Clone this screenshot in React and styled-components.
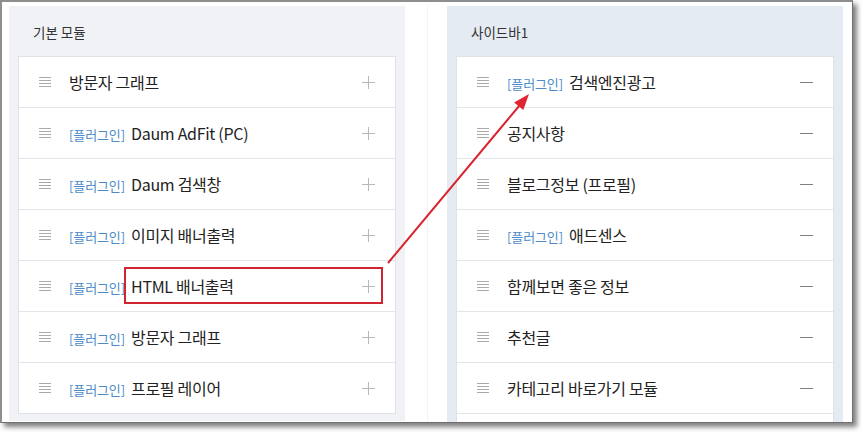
import React from "react";
import styled, { createGlobalStyle } from "styled-components";

const Global = createGlobalStyle`
  html, body { margin: 0; padding: 0; background: #ffffff; }
  body { font-family: "Noto Sans CJK KR", "Noto Sans", sans-serif; }
`;

const Stage = styled.div`
  position: relative;
  width: 862px;
  height: 432px;
  overflow: hidden;
`;

const Frame = styled.div`
  box-sizing: border-box;
  width: 853px;
  height: 423px;
  border-top: 2px solid #8e8e8e;
  border-left: 2px solid #8e8e8e;
  border-right: 1px solid #6f6f6f;
  border-bottom: 1px solid #6f6f6f;
  box-shadow: 4px 4px 5px rgba(0, 0, 0, 0.5);
  background: #ffffff;
  padding: 4px 9px 0 7px;
  display: flex;
  overflow: hidden;
`;

const Panel = styled.section`
  width: 396px;
  flex: none;
  background: ${(p) => (p.$tone === "blue" ? "#e5ebf2" : "#f0f2f5")};
  padding: 0 9px 7px;
  box-sizing: border-box;
  align-self: flex-start;
`;

const PanelTitle = styled.div`
  height: 50px;
  display: flex;
  align-items: center;
  padding-left: 15px;
  padding-top: 2px;
  box-sizing: border-box;
  font-size: 13.5px;
  color: #333;
`;

const List = styled.ul`
  list-style: none;
  margin: 0;
  padding: 0;
  background: #ffffff;
  border: 1px solid #dfe2e6;
`;

const Row = styled.li`
  height: 50px;
  display: flex;
  align-items: center;
  padding: 0 20px;
  border-top: 1px solid #e3e5e9;
  &:first-child { border-top: none; }
`;

const Handle = styled.span`
  width: 12px;
  height: 10px;
  flex: none;
  margin-right: 18px;
  background: repeating-linear-gradient(
    to bottom,
    #aaaaaa 0,
    #aaaaaa 1px,
    transparent 1px,
    transparent 3px
  );
`;

const Label = styled.span`
  flex: 1;
  font-size: 16px;
  color: #222;
  white-space: nowrap;
  letter-spacing: -0.3px;
`;

const Tag = styled.span`
  font-size: 13px;
  color: #4d8bc8;
  margin-right: 6px;
  letter-spacing: -0.1px;
`;

const Gap = styled.div`
  width: 42px;
  flex: none;
  display: flex;
  justify-content: flex-start;
  padding-left: 22px;
  box-sizing: border-box;
`;

const GapLine = styled.div`
  width: 1px;
  height: 100%;
  background: #f2f3f5;
`;

const ActionIcon = ({ kind }) => (
  <svg width="13" height="13" viewBox="0 0 13 13" style={{ flex: "none" }}>
    <line
      x1="0"
      y1="6.5"
      x2="13"
      y2="6.5"
      stroke={kind === "add" ? "#b8b8b8" : "#808080"}
      strokeWidth="1"
    />
    {kind === "add" && (
      <line x1="6.5" y1="0" x2="6.5" y2="13" stroke="#b8b8b8" strokeWidth="1" />
    )}
  </svg>
);

const Overlay = styled.svg`
  position: absolute;
  left: 0;
  top: 0;
  pointer-events: none;
`;

const basic = [
  { name: "방문자 그래프" },
  { tag: true, name: "Daum AdFit (PC)" },
  { tag: true, name: "Daum 검색창" },
  { tag: true, name: "이미지 배너출력" },
  { tag: true, name: "HTML 배너출력" },
  { tag: true, name: "방문자 그래프" },
  { tag: true, name: "프로필 레이어" },
];

const sidebar = [
  { tag: true, name: "검색엔진광고" },
  { name: "공지사항" },
  { name: "블로그정보 (프로필)" },
  { tag: true, name: "애드센스" },
  { name: "함께보면 좋은 정보" },
  { name: "추천글" },
  { name: "카테고리 바로가기 모듈" },
  { name: "" },
];

const ModuleList = ({ items, kind }) => (
  <List>
    {items.map((it, i) => (
      <Row key={i}>
        <Handle />
        <Label>
          {it.tag && <Tag>[플러그인]</Tag>}
          {it.name}
        </Label>
        <ActionIcon kind={kind} />
      </Row>
    ))}
  </List>
);

export default function App() {
  return (
    <>
      <Global />
      <Stage>
        <Frame>
          <Panel>
            <PanelTitle>기본 모듈</PanelTitle>
            <ModuleList items={basic} kind="add" />
          </Panel>
          <Gap>
            <GapLine />
          </Gap>
          <Panel $tone="blue">
            <PanelTitle>사이드바1</PanelTitle>
            <ModuleList items={sidebar} kind="remove" />
          </Panel>
        </Frame>
        <Overlay width="862" height="432" viewBox="0 0 862 432">
          <rect x="125" y="268" width="257" height="35" fill="none" stroke="#cf2530" strokeWidth="2" />
          <line x1="388" y1="263" x2="519.5" y2="105.5" stroke="#d9232d" strokeWidth="2" />
          <polygon points="529,94 523.3,110.1 514.1,102.5" fill="#e02530" />
        </Overlay>
      </Stage>
    </>
  );
}
